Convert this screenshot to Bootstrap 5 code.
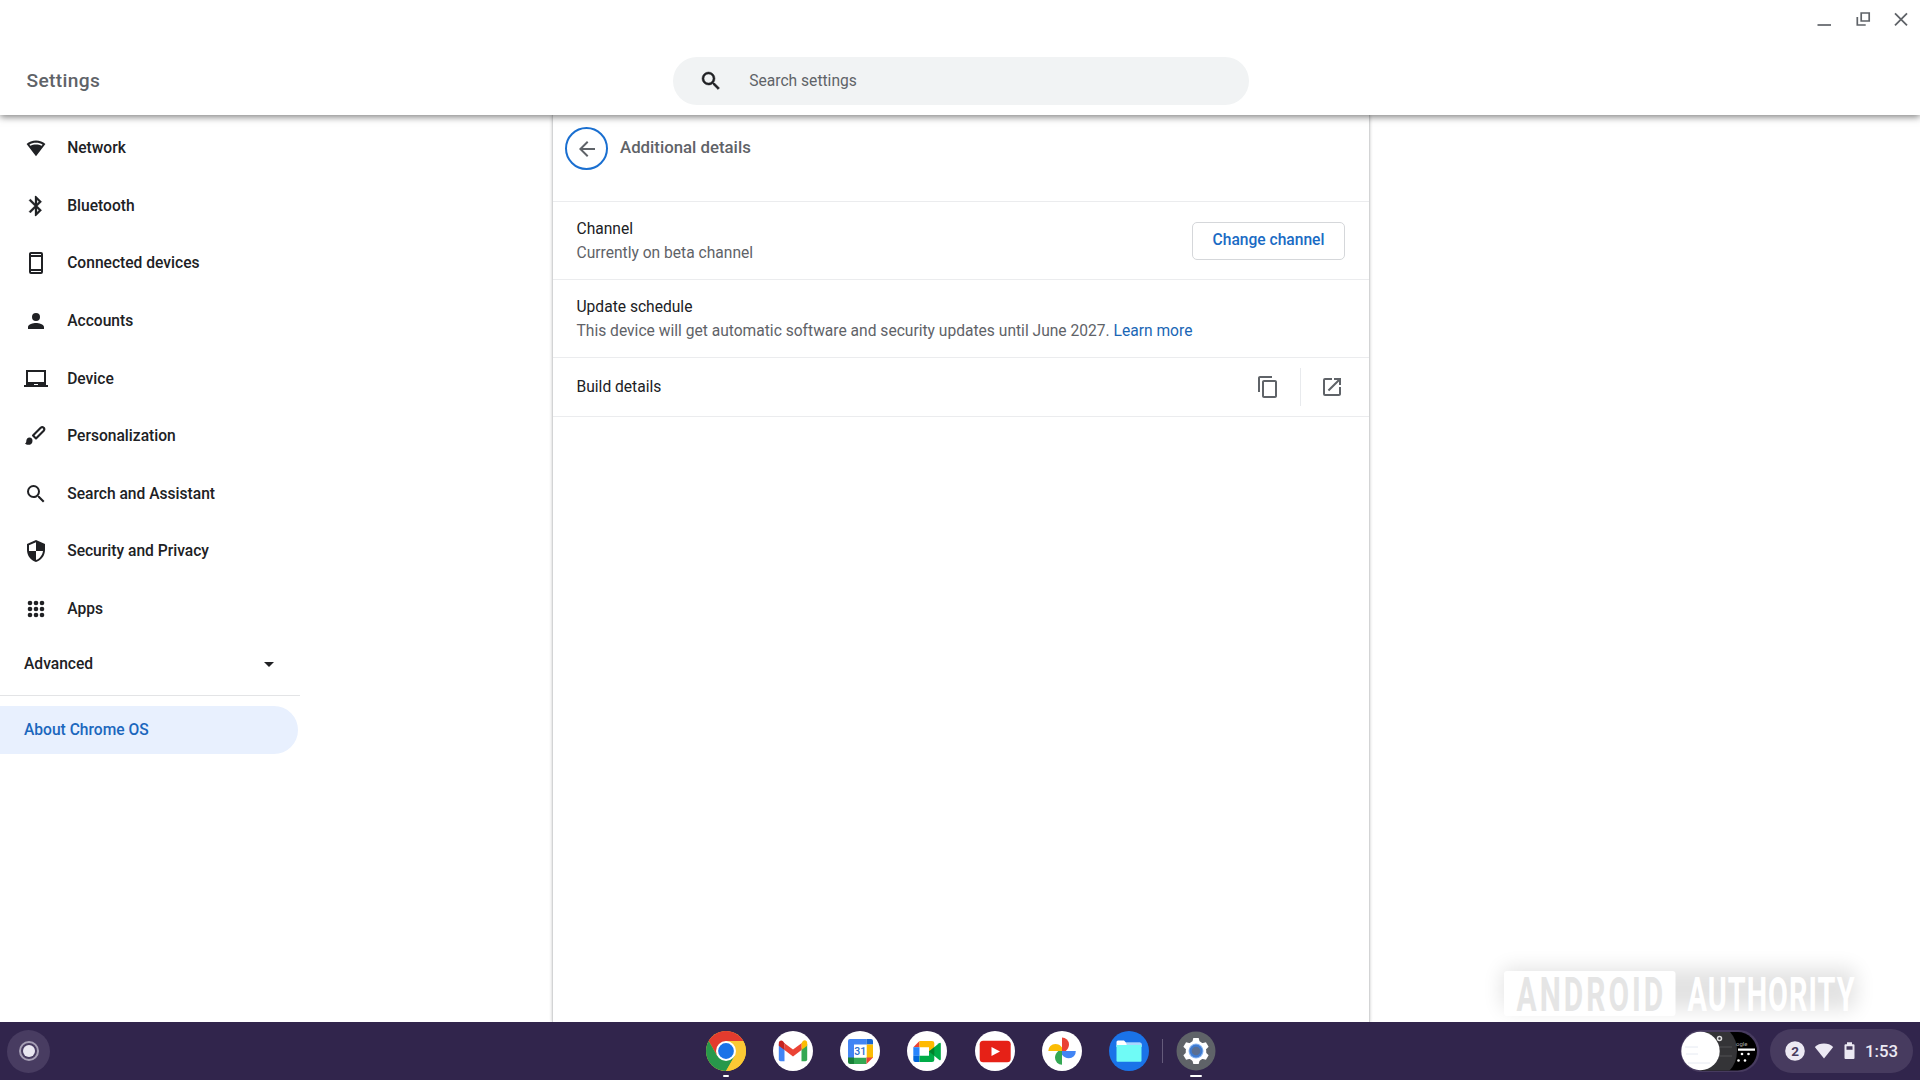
<!DOCTYPE html>
<html lang="en">
<head>
<meta charset="utf-8">
<title>Settings</title>
<link href="https://cdn.jsdelivr.net/npm/bootstrap@5.3.0/dist/css/bootstrap.min.css" rel="stylesheet">
<style>
body{font-family:Roboto,"Liberation Sans",sans-serif;font-size:15.6px;line-height:24px;color:#202124;background:#fff;height:1080px;overflow:hidden}
svg{display:block;flex:none}
.fw-med{font-weight:500}
.topbar{height:115px;box-shadow:0 2px 7px rgba(0,0,0,.5);z-index:3;background:#fff}
.winctl{height:38px;padding-right:7px;gap:14.3px;color:#5f6368}
.titlebar{height:77px;padding-top:9px}
.app-title{width:673px;padding-left:26.5px;font-size:19.2px;color:#5f6368;letter-spacing:.35px}
.searchbox{width:576px;height:48px;background:#f1f3f4;border-radius:24px;padding-left:26px;color:#5f6368}
.searchbox svg{color:#202124;margin-right:26.3px}
.side{width:300px;padding-top:4.6px}
.side .nav-link{height:57.55px;padding:0 0 0 24px;gap:19.2px;color:#202124;font-weight:500}
.adv{height:57.4px;padding:0 19px 4.4px 24px}
.side-rule{height:1px;background:#e3e4e6}
.side .nav-link.about{height:48px;margin-top:10.5px;width:298px;border-radius:0 24px 24px 0;background:#e8f0fe;color:#1b67bd}
.pane{width:818px;margin-left:252px;border:solid #d3d4d5;border-width:0 1px;box-shadow:0 0 3px rgba(0,0,0,.22)}
.pane-head{height:86px;padding:12px 12px 0}
.back{width:43px;height:43px;border:2.4px solid #1a6fd0;color:#5f6368}
.pane-title{font-size:16.8px;color:#5f6368;padding:7.5px 0 0 12px}
.setrow{border-top:1px solid #ebecee;height:78.2px;padding:0 24px 0 23.5px}
.setrow.build{height:59.5px;border-bottom:1px solid #ebecee;padding-right:25px}
.sub{color:#5f6368}
.sub a{color:#1a66b5;text-decoration:none}
.btn-chan{width:153px;height:38px;border:1px solid #d5d7da;border-radius:5px;color:#1a6bc4;font-weight:500;font-size:15.6px;padding:1px 0 0}
.vsep{width:1px;height:38px;background:#e8eaed;margin:0 19.5px}
.shelf{height:58px;background:#31254c;z-index:4}
.launcher{width:43px;height:43px;background:#483c61;margin-left:7px}
.launcher i{width:20px;height:20px;border:2px solid #a69fb5;background:#e9e7f1;background-clip:content-box;padding:2px}
.apps{left:705.5px;top:8.7px;gap:27.3px}
.ind{height:2px;background:#fff;bottom:-6.3px;left:50%;transform:translateX(-50%);border-radius:1px}
.shelf-sep{width:1px;height:24px;background:#655b7b;margin:0 -14px 0 -15px}
.tray{height:44px;width:142.5px;border-radius:22px;background:#473b5f;color:#ece9f3;padding-left:15px;font-size:16.8px;margin:0 7.5px 0 10px}
.wm{right:0;bottom:58px;z-index:2}
</style>
<script src="https://cdn.jsdelivr.net/npm/bootstrap@5.3.0/dist/js/bootstrap.bundle.min.js"></script>
</head>
<body class="d-flex flex-column">
<header class="topbar position-relative flex-shrink-0">
  <div class="winctl d-flex justify-content-end align-items-center">
    <svg width="24" height="24" viewBox="0 0 24 24" stroke="currentColor" stroke-width="1.7" fill="none"><path d="M5.500 18H19"/></svg>
    <svg width="24" height="24" viewBox="0 0 24 24" stroke="currentColor" stroke-width="1.700" fill="none"><path d="M10.200 6h8v8h-8zM6.300 10v8h8.400"/></svg>
    <svg width="24" height="24" viewBox="0 0 24 24" stroke="currentColor" stroke-width="1.800" fill="none"><path d="M6 6.300l12 12M18 6.300l-12 12"/></svg>
  </div>
  <div class="titlebar d-flex align-items-center">
    <div class="app-title fw-med">Settings</div>
    <div class="searchbox d-flex align-items-center">
      <svg width="24" height="24" viewBox="0 0 24 24" fill="currentColor" stroke="currentColor" stroke-width=".5"><path d="M15.500 14h-.79l-.28-.27A6.470 6.470 0 0 0 16 9.500 6.500 6.500 0 1 0 9.500 16c1.610 0 3.090-.59 4.230-1.570l.27.28v.79l5 4.990L20.490 19zm-6 0a4.500 4.500 0 1 1 0-9 4.500 4.500 0 0 1 0 9z"/></svg>
      Search settings
    </div>
  </div>
</header>
<div class="d-flex flex-grow-1">
  <nav class="side nav flex-column flex-nowrap flex-shrink-0">
    <a class="nav-link d-flex align-items-center"><svg width="24" height="24" viewBox="0 0 24 24"><path fill="currentColor" fill-rule="evenodd" d="M12 4.500C8.300 4.500 5 5.800 2.600 8L12 20.200 21.400 8C19 5.800 15.700 4.500 12 4.500zm0 2.300c2.500 0 4.800.6 6.600 1.900l-.9 1.100C16 8.900 14.100 8.400 12 8.400s-4 .5-5.700 1.400l-.9-1.100C7.200 7.400 9.500 6.800 12 6.800z"/></svg>Network</a>
    <a class="nav-link d-flex align-items-center"><svg width="24" height="24" viewBox="0 0 24 24"><path fill="currentColor" stroke="currentColor" stroke-width=".3" d="M17.710 7.710L12 2h-1v7.590L6.410 5 5 6.410 10.590 12 5 17.590 6.410 19 11 14.410V22h1l5.710-5.710-4.300-4.290 4.300-4.290zM13 5.830l1.880 1.880L13 9.590V5.830zm1.880 10.460L13 18.170v-3.760l1.880 1.880z"/></svg>Bluetooth</a>
    <a class="nav-link d-flex align-items-center"><svg width="24" height="24" viewBox="0 0 24 24"><path fill="currentColor" fill-rule="evenodd" d="M7 1h10a2 2 0 0 1 2 2v18a2 2 0 0 1-2 2H7a2 2 0 0 1-2-2V3c0-1.100.9-2 2-2zm0 5v12h10V6zm0-3v1h10V3zm0 17v1h10v-1z"/></svg>Connected devices</a>
    <a class="nav-link d-flex align-items-center"><svg width="24" height="24" viewBox="0 0 24 24"><path fill="currentColor" d="M12 12a4 4 0 1 0 0-8 4 4 0 0 0 0 8zm0 2c-2.670 0-8 1.340-8 4v2h16v-2c0-2.660-5.330-4-8-4z"/></svg>Accounts</a>
    <a class="nav-link d-flex align-items-center"><svg width="24" height="24" viewBox="0 0 24 24"><path fill="currentColor" d="M22 18V3H2v15H0v2h24v-2h-2zm-8 0h-4v-1h4v1zm6-3H4V5h16v10z"/></svg>Device</a>
    <a class="nav-link d-flex align-items-center"><svg width="24" height="24" viewBox="0 0 24 24"><path d="M9 11.500L16.700 3.800q1.500-1.300 3 0 1.300 1.500 0 3L12 14.500z" fill="none" stroke="currentColor" stroke-width="2.100" stroke-linejoin="round"/><path fill="currentColor" d="M5.500 13.500a3.300 3.300 0 0 1 3 3.400c0 2.500-2 3.900-4.200 3.900-1.300 0-2.500-.5-3.300-1.400 1.100-.4 1.300-1.100 1.300-2.400 0-1.900 1.300-3.500 3.200-3.500z"/></svg>Personalization</a>
    <a class="nav-link d-flex align-items-center"><svg width="24" height="24" viewBox="0 0 24 24"><path fill="currentColor" d="M15.500 14h-.79l-.28-.27A6.470 6.470 0 0 0 16 9.500 6.500 6.500 0 1 0 9.500 16c1.610 0 3.090-.59 4.230-1.570l.27.28v.79l5 4.990L20.490 19zm-6 0a4.500 4.500 0 1 1 0-9 4.500 4.500 0 0 1 0 9z"/></svg>Search and Assistant</a>
    <a class="nav-link d-flex align-items-center"><svg width="24" height="24" viewBox="0 0 24 24"><path fill="currentColor" d="M12 1L3 5v6c0 5.550 3.840 10.740 9 12 5.160-1.260 9-6.450 9-12V5zm0 10.990h7c-.53 4.120-3.280 7.790-7 8.940V12H5V6.300l7-3.110z"/></svg>Security and Privacy</a>
    <a class="nav-link d-flex align-items-center"><svg width="24" height="24" viewBox="0 0 24 24" fill="currentColor"><circle cx="6" cy="6" r="2.300"/><circle cx="12" cy="6" r="2.300"/><circle cx="18" cy="6" r="2.300"/><circle cx="6" cy="12" r="2.300"/><circle cx="12" cy="12" r="2.300"/><circle cx="18" cy="12" r="2.300"/><circle cx="6" cy="18" r="2.300"/><circle cx="12" cy="18" r="2.300"/><circle cx="18" cy="18" r="2.300"/></svg>Apps</a>
    <div class="adv d-flex align-items-center justify-content-between fw-med">Advanced<svg width="24" height="24" viewBox="0 0 24 24"><path fill="currentColor" d="M7 10l5 5 5-5z"/></svg></div>
    <div class="side-rule"></div>
    <a class="nav-link about d-flex align-items-center">About Chrome OS</a>
  </nav>
  <main class="pane">
    <div class="pane-head d-flex align-items-start">
      <div class="back rounded-circle d-flex align-items-center justify-content-center flex-shrink-0"><svg width="24" height="24" viewBox="0 0 24 24"><path fill="currentColor" d="M20 11H7.830l5.590-5.590L12 4l-8 8 8 8 1.410-1.410L7.830 13H20z"/></svg></div>
      <div class="pane-title fw-med">Additional details</div>
    </div>
    <div class="setrow d-flex align-items-center justify-content-between">
      <div><div>Channel</div><div class="sub">Currently on beta channel</div></div>
      <button class="btn btn-chan">Change channel</button>
    </div>
    <div class="setrow d-flex align-items-center">
      <div><div>Update schedule</div><div class="sub">This device will get automatic software and security updates until June 2027. <a href="#">Learn more</a></div></div>
    </div>
    <div class="setrow build d-flex align-items-center">
      <div class="me-auto">Build details</div>
      <svg width="24" height="24" viewBox="0 0 24 24" fill="#5f6368"><path d="M16 1H4c-1.100 0-2 .9-2 2v14h2V3h12V1zm3 4H8c-1.100 0-2 .9-2 2v14c0 1.100.9 2 2 2h11c1.100 0 2-.9 2-2V7c0-1.100-.9-2-2-2zm0 16H8V7h11v14z"/></svg>
      <div class="vsep"></div>
      <svg width="24" height="24" viewBox="0 0 24 24" fill="#5f6368"><path d="M19 19H5V5h7V3H5a2 2 0 0 0-2 2v14a2 2 0 0 0 2 2h14c1.100 0 2-.9 2-2v-7h-2v7zM14 3v2h3.590l-9.830 9.830 1.410 1.410L19 6.410V10h2V3h-7z"/></svg>
    </div>
  </main>
</div>
<svg class="wm position-absolute" width="460" height="92" viewBox="1460 930 460 92">
  <defs><filter id="glow" x="-20%" y="-60%" width="140%" height="220%"><feGaussianBlur stdDeviation="10"/></filter></defs>
  <rect x="1502" y="968" width="354" height="42" rx="8" fill="#000" opacity=".11" filter="url(#glow)"/>
  <rect x="1504" y="971" width="171.500" height="45" rx="3" fill="#fff"/>
  <g font-family="Roboto, sans-serif" font-weight="700" font-size="49">
    <text transform="translate(1516.500 1011) scale(.61 1)" letter-spacing="5" fill="#e5e5e5">ANDROID</text>
    <text transform="translate(1687.500 1011) scale(.59 1)" letter-spacing="1.700" fill="#fff">AUTHORITY</text>
  </g>
</svg>
<footer class="shelf position-relative flex-shrink-0 d-flex align-items-center">
  <div class="launcher rounded-circle d-flex align-items-center justify-content-center"><i class="rounded-circle"></i></div>
  <div class="apps position-absolute d-flex align-items-center">
    <div class="position-relative"><svg width="40" height="40" viewBox="0 0 40 40"><circle cx="20" cy="20" r="20" fill="#fbc934"/><path d="M2.700 10A20 20 0 0 1 37.300 10H20L11.300 25z" fill="#e33b2e"/><path d="M2.700 10A20 20 0 0 0 20 40L28.700 25 20 20 11.300 25z" fill="#28984b"/><path d="M20 10h17.300A20 20 0 0 1 20 40l8.700-15z" fill="#fbc934"/><circle cx="20" cy="20" r="10" fill="#fff"/><circle cx="20" cy="20" r="7.900" fill="#1a73e8"/></svg><span class="ind position-absolute" style="width:6px"></span></div>
    <svg width="40" height="40" viewBox="0 0 40 40"><circle cx="20" cy="20" r="20" fill="#fff"/><path d="M5.800 13v15.500q0 1.800 1.800 1.800h3.900V17z" fill="#4285f4"/><path d="M28.500 17v13.300h3.900q1.800 0 1.800-1.800V13z" fill="#34a853"/><path d="M28.500 12.300V19l5.700-4.300V12c0-2.500-2.500-3.500-4.300-2z" fill="#fbbc04"/><path d="M11.500 19v-6.700L20 18.600l8.500-6.300V19L20 25.400z" fill="#ea4335"/><path d="M5.800 12v2.700l5.700 4.300v-6.700L10 10.200C8.300 8.900 5.800 9.700 5.800 12z" fill="#c5221f"/></svg>
    <svg width="40" height="40" viewBox="0 0 40 40"><circle cx="20" cy="20" r="20" fill="#fff"/><path d="M8 10q0-2 2-2h16.500v6H8z" fill="#4285f4"/><path d="M8 13h6v14H8z" fill="#4285f4"/><path d="M26.500 8H31q2 0 2 2v3.500h-6.500z" fill="#1967d2"/><path d="M26.500 13.500H33V27h-6.500z" fill="#fbbc04"/><path d="M14 26.500h12.500V33H14z" fill="#34a853"/><path d="M8 26.500h6V33h-4q-2 0-2-2z" fill="#188038"/><path d="M26.500 26.500H33L26.500 33z" fill="#ea4335"/><path d="M14 13.500h12.500v13H14z" fill="#fff"/><text x="20.200" y="24" text-anchor="middle" font-family="Roboto, sans-serif" font-weight="500" font-size="10.500" fill="#2a6fd0">31</text></svg>
    <svg width="40" height="40" viewBox="0 0 40 40"><circle cx="20" cy="20" r="20" fill="#fff"/><path d="M12.500 10v6.200H6.300z" fill="#ea4335"/><path d="M6.300 16.200h6.200v8.600H6.300z" fill="#2684fc"/><path d="M6.300 24.800h6.200V31H8.300q-2 0-2-2z" fill="#0066da"/><path d="M12.500 10H25q2.300 0 2.300 2v5.200l-5.300 4v-5h-9.500z" fill="#ffba00"/><path d="M12.500 31H25q2.300 0 2.300-2v-6L22 19.500v5.300h-9.500z" fill="#00ac47"/><path d="M22 20.500l10-8.200q1.800-1.200 1.800.8v15q0 2-1.800.6z" fill="#00ac47"/><path d="M27.300 16.200L22 20.500l5.300 4.300z" fill="#00832d"/></svg>
    <svg width="40" height="40" viewBox="0 0 40 40"><circle cx="20" cy="20" r="20" fill="#fff"/><rect x="4.700" y="9.700" width="31" height="21.500" rx="3.500" fill="#e62117"/><path d="M16.500 16v9l8.500-4.500z" fill="#fff"/></svg>
    <svg width="40" height="40" viewBox="0 0 40 40"><circle cx="20" cy="20" r="20" fill="#fff"/><path d="M20 20V6.500a7 7 0 0 1 7 6.800c0 3-1.200 5-3.200 6.700z" fill="#ea4335"/><path d="M20 20h13.800a7 7 0 0 1-7 7.300c-3 0-5-1.300-6.800-3.500z" fill="#4285f4"/><path d="M20 20v13.800a7 7 0 0 1-7-7c0-3 1.300-5 3.300-6.800z" fill="#34a853"/><path d="M20 20H6.300a7 7 0 0 1 7-7c3 0 5 1.200 6.700 3.400z" fill="#fbbc04"/></svg>
    <svg width="40" height="40" viewBox="0 0 40 40"><circle cx="20" cy="20" r="20" fill="#1a73e8"/><path d="M7.500 11q0-1.500 1.500-1.500h6l2.200 2.300H31q1.500 0 1.500 1.500V16h-25z" fill="#fff"/><path d="M17 11.500h14q1.500 0 1.500 1.500v2H18z" fill="#a8d7ff"/><path d="M7.500 14h25v15.500q0 1.200-1.200 1.200H8.700q-1.200 0-1.200-1.200z" fill="#6ffbf6"/></svg>
    <div class="shelf-sep"></div>
    <div class="position-relative"><svg width="40" height="40" viewBox="0 0 40 40"><circle cx="20" cy="20" r="19.500" fill="#5f6368"/><g fill="#fff"><circle cx="20" cy="20" r="10.300"/><path id="tooth" d="M16.300 11l1-4h5.400l1 4v18l-1 4h-5.400l-1-4z"/><use href="#tooth" transform="rotate(60 20 20)"/><use href="#tooth" transform="rotate(120 20 20)"/></g><circle cx="20" cy="20" r="7.500" fill="#8db8f3"/><circle cx="20" cy="20" r="6.500" fill="#3f7bd0"/><circle cx="20" cy="20" r="4.300" fill="#5a6f92"/></svg><span class="ind position-absolute" style="width:12px"></span></div>
  </div>
  <svg class="ms-auto" width="80" height="42" viewBox="1680 1030 80 42">
    <defs><clipPath id="pc"><rect x="1681" y="1032" width="76" height="38.500" rx="19.250"/></clipPath></defs>
    <rect x="1680.500" y="1030" width="79" height="42" rx="21" fill="#473b5f"/>
    <g clip-path="url(#pc)"><rect x="1700" y="1030" width="60" height="42" fill="#000"/>
    <path d="M1700 1030h28q9 8 9 21t-9 21h-28z" fill="#343437"/><path d="M1718 1047h14M1719 1056h13" stroke="#515154" stroke-width="1"/>
    <circle cx="1719.500" cy="1038.500" r="2" fill="none" stroke="#ddd" stroke-width="1.500"/>
    <path d="M1738 1049.700h17" stroke="#fff" stroke-width="2.200"/><text x="1736" y="1045.500" font-size="6" font-family="Roboto, sans-serif" fill="#aaa">ogle</text>
    <g fill="#fff"><circle cx="1742" cy="1054" r="1.300"/><circle cx="1748.500" cy="1054" r="1.300"/><circle cx="1738.500" cy="1060.500" r="1.300"/><circle cx="1745" cy="1060.500" r="1.300"/></g></g>
    <circle cx="1700.500" cy="1051" r="19.200" fill="#fff"/><path d="M1685 1047h13M1686 1054h12M1688 1063h22" stroke="#e6eaf2" stroke-width="1"/>
  </svg>
  <div class="tray d-flex align-items-center">
    <svg width="20" height="20" viewBox="0 0 20 20"><circle cx="10" cy="10" r="9.800" fill="#ece9f3"/><text x="10" y="14.800" text-anchor="middle" font-family="Roboto, sans-serif" font-size="13.500" font-weight="700" fill="#473b5f">2</text></svg>
    <svg style="margin-left:9px" width="20" height="20" viewBox="0 0 20 20"><path fill="currentColor" d="M10 17.500L.8 6Q4.500 2.600 10 2.600T19.200 6z"/></svg>
    <svg style="margin-left:9.5px" width="11" height="20" viewBox="0 0 11 20"><path fill="currentColor" fill-rule="evenodd" d="M3 1.200h5v2h1.500q1 0 1 1V17q0 1-1 1h-8q-1 0-1-1V4.200q0-1 1-1H3zM2.500 5.200v3.600h6V5.200z"/></svg>
    <span class="fw-med" style="margin-left:10.500px">1:53</span>
  </div>
</footer>
</body>
</html>
